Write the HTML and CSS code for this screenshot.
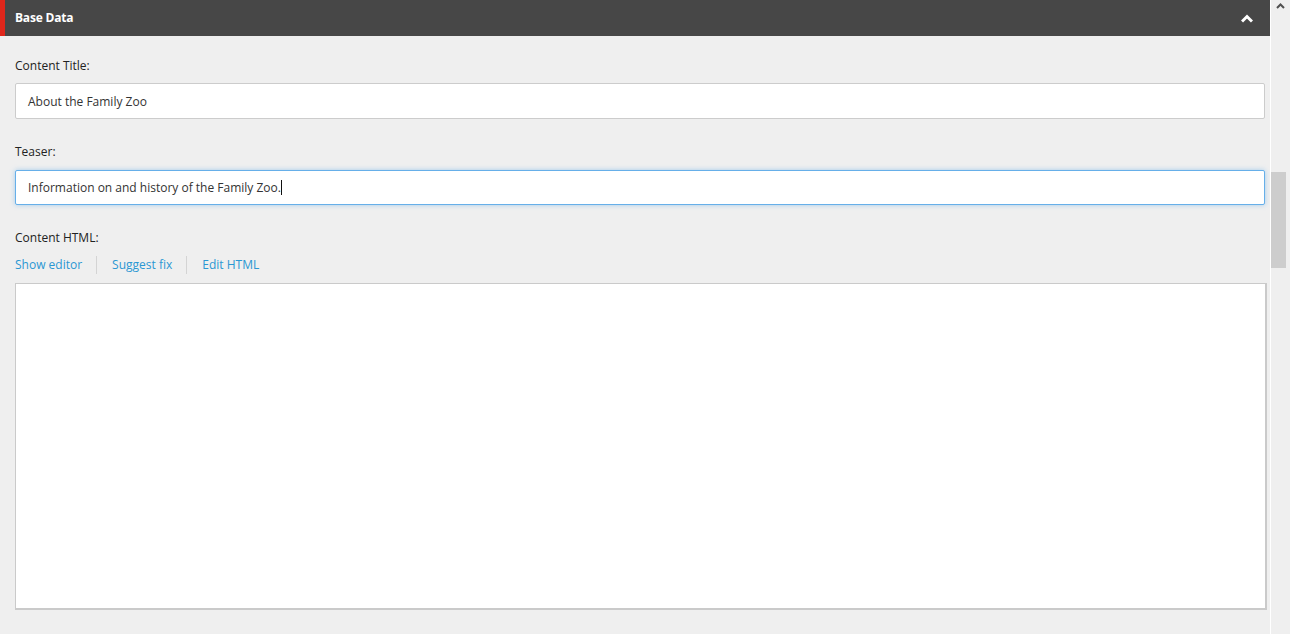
FILE: index.html
```html
<!DOCTYPE html>
<html lang="en">
<head>
<meta charset="utf-8">
<title>Base Data</title>
<link rel="stylesheet" href="styles.css">
</head>
<body>
<div class="page">
  <div class="main">
    <div class="section-header">
      <span class="section-title">Base Data</span>
      <svg class="chevron" width="12" height="9" viewBox="0 0 12 9"><polyline points="1,7.5 6,2.5 11,7.5" fill="none" stroke="#fff" stroke-width="3"/></svg>
    </div>
    <div class="form">
      <div class="field">
        <div class="field-label first">Content Title:</div>
        <div class="field-input">About the Family Zoo</div>
      </div>
      <div class="field">
        <div class="field-label tight">Teaser:</div>
        <div class="field-input focused">Information on and history of the Family Zoo.<span class="caret"></span></div>
      </div>
      <div class="field">
        <div class="field-label">Content HTML:</div>
        <div class="field-links">
          <a class="field-link">Show editor</a>
          <a class="field-link">Suggest fix</a>
          <a class="field-link">Edit HTML</a>
        </div>
        <div class="editor"></div>
      </div>
    </div>
  </div>
  <div class="scrollbar">
    <svg class="scroll-arrow" width="9" height="6" viewBox="0 0 9 6"><polyline points="1,5 4.5,1.5 8,5" fill="none" stroke="#505050" stroke-width="2"/></svg>
    <div class="scroll-thumb"></div>
  </div>
</div>
</body>
</html>
```
FILE: styles.css
```css
html, body {
  margin: 0;
  padding: 0;
  height: 100%;
  overflow: hidden;
}
body {
  background: #efefef;
  font-family: "Open Sans", "Liberation Sans", Arial, sans-serif;
  font-size: 12px;
  color: #222;
}
.page {
  display: flex;
  height: 634px;
}
.main {
  width: 1270px;
  flex: none;
}
.section-header {
  height: 36px;
  background: #474747;
  border-left: 5px solid #e0261b;
  box-sizing: border-box;
  display: flex;
  align-items: center;
  justify-content: space-between;
  padding: 0 17px 0 10px;
}
.section-title {
  color: #fff;
  font-weight: 700;
  font-size: 12px;
  line-height: 18px;
  letter-spacing: -0.2px;
}
.chevron {
  display: block;
  margin-top: 1px;
}
.form {
  padding: 21px 3px 0 15px;
}
.field {
  margin-bottom: 24px;
}
.field-label {
  line-height: 18px;
  height: 18px;
  margin-bottom: 10px;
}
.field-label.first {
  margin-bottom: 8px;
}
.field-label.tight {
  margin-bottom: 9px;
}
.field-input {
  height: 36px;
  box-sizing: border-box;
  margin-right: 2px;
  background: #fff;
  border: 1px solid #ccc;
  border-radius: 2px;
  padding: 1px 12px 0;
  line-height: 34px;
  color: #333;
  white-space: nowrap;
}
.field-input.focused {
  border-color: #66afe9;
  box-shadow: 0 0 5px rgba(102, 175, 233, 0.55);
  height: 35px;
  padding-top: 0;
  line-height: 33px;
}
.caret {
  display: inline-block;
  width: 1px;
  height: 15px;
  background: #111;
  vertical-align: -3px;
}
.field-links {
  display: flex;
  height: 18px;
  line-height: 18px;
  margin-top: -1px;
  margin-bottom: 9px;
}
.field-link {
  color: #2b97d3;
  padding: 0 14px 0 15px;
  border-left: 1px solid #d4d4d4;
  cursor: pointer;
}
.field-link:first-child {
  padding-left: 0;
  border-left: none;
}
.editor {
  height: 327px;
  box-sizing: border-box;
  background: #fff;
  border-style: solid;
  border-color: #cacaca;
  border-width: 1px 2px 2px 1px;
}
.scrollbar {
  width: 20px;
  flex: none;
  box-sizing: border-box;
  border-left: 1px solid #fff;
  background: #efefef;
  position: relative;
}
.scroll-arrow {
  position: absolute;
  left: 5px;
  top: 3px;
}
.scroll-thumb {
  position: absolute;
  left: 0;
  top: 172px;
  width: 15px;
  height: 96px;
  background: #cdcdcd;
}
```
